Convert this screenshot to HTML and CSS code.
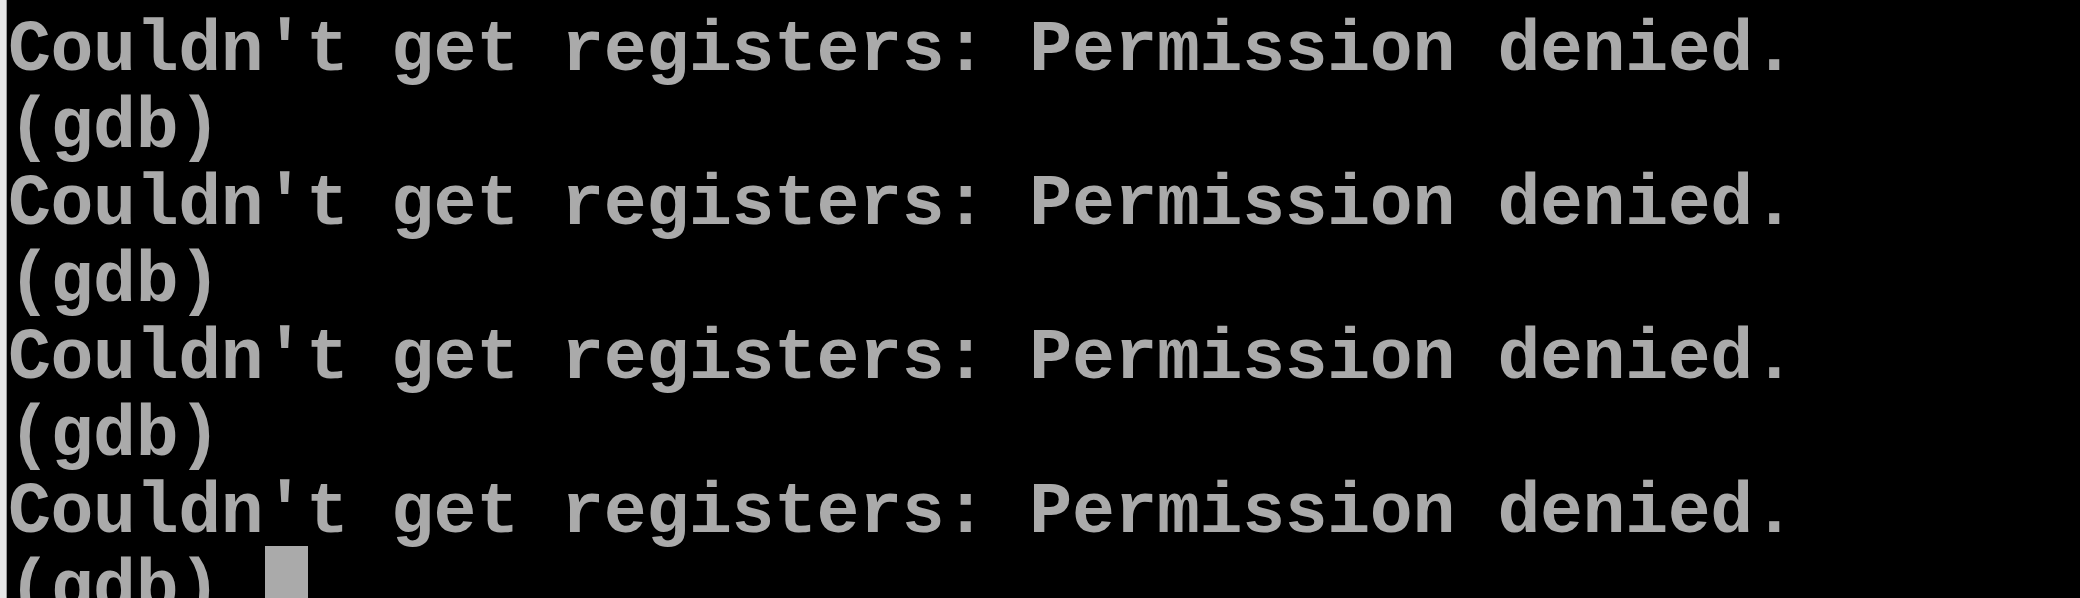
FILE: index.html
```html
<!DOCTYPE html>
<html>
<head>
<meta charset="utf-8">
<link rel="stylesheet" href="styles.css">
</head>
<body>
<div class="window">
  <div class="edge"></div>
  <div class="terminal">
    <div class="line">Couldn't get registers: Permission denied.</div>
    <div class="line">(gdb)</div>
    <div class="line">Couldn't get registers: Permission denied.</div>
    <div class="line">(gdb)</div>
    <div class="line">Couldn't get registers: Permission denied.</div>
    <div class="line">(gdb)</div>
    <div class="line">Couldn't get registers: Permission denied.</div>
    <div class="line">(gdb) <span class="cursor"></span></div>
  </div>
</div>
</body>
</html>
```
FILE: styles.css
```css
html, body {
  margin: 0;
  padding: 0;
  background: #000;
}
.window {
  display: flex;
  width: 2080px;
  height: 598px;
  overflow: hidden;
}
.edge {
  width: 6px;
  background: #e6e6e6;
  border-right: 1px solid #9a9a9a;
  flex: none;
}
.terminal {
  flex: 1;
  background: #000;
  padding: 12px 0 0 1px;
  font-family: "Liberation Mono", "DejaVu Sans Mono", monospace;
  font-weight: bold;
  font-size: 71.5px;
  letter-spacing: -0.35px;
  line-height: 77px;
  color: #aaaaaa;
}
.line {
  white-space: pre;
  height: 77px;
}
.cursor {
  display: inline-block;
  width: 43px;
  height: 77px;
  margin-top: -5px;
  margin-left: 2px;
  background: #aaaaaa;
  vertical-align: top;
}
```
